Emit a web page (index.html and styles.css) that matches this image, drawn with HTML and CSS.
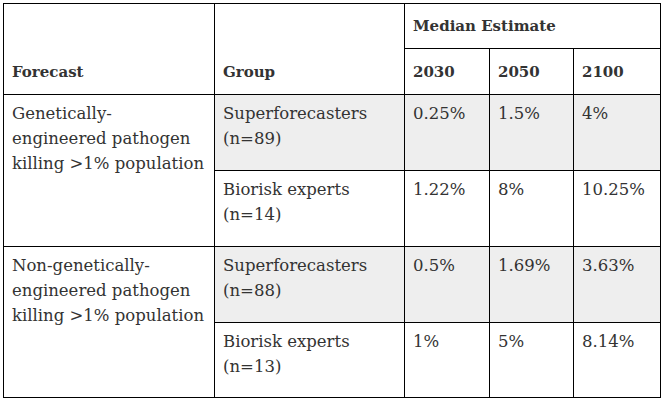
FILE: index.html
```html
<!DOCTYPE html>
<html lang="en">
<head>
<meta charset="utf-8">
<title>Median Estimate</title>
<link rel="stylesheet" href="styles.css">
</head>
<body>
<table class="forecast-table">
  <colgroup>
    <col class="col-forecast">
    <col class="col-group">
    <col class="col-year-a">
    <col class="col-year-b">
    <col class="col-year-c">
  </colgroup>
  <thead>
    <tr class="head-row-1">
      <th class="head-bottom" rowspan="2">Forecast</th>
      <th class="head-bottom" rowspan="2">Group</th>
      <th class="head-span" colspan="3">Median Estimate</th>
    </tr>
    <tr class="head-row-2">
      <th>2030</th>
      <th>2050</th>
      <th>2100</th>
    </tr>
  </thead>
  <tbody>
    <tr class="body-row shaded">
      <td class="forecast-cell" rowspan="2">Genetically-<br>engineered pathogen killing &gt;1% population</td>
      <td>Superforecasters (n=89)</td>
      <td>0.25%</td>
      <td>1.5%</td>
      <td>4%</td>
    </tr>
    <tr class="body-row">
      <td>Biorisk experts (n=14)</td>
      <td>1.22%</td>
      <td>8%</td>
      <td>10.25%</td>
    </tr>
    <tr class="body-row shaded">
      <td class="forecast-cell" rowspan="2">Non-genetically-<br>engineered pathogen killing &gt;1% population</td>
      <td>Superforecasters (n=88)</td>
      <td>0.5%</td>
      <td>1.69%</td>
      <td>3.63%</td>
    </tr>
    <tr class="body-row last">
      <td>Biorisk experts (n=13)</td>
      <td>1%</td>
      <td>5%</td>
      <td>8.14%</td>
    </tr>
  </tbody>
</table>
</body>
</html>
```

FILE: styles.css
```css
html, body {
  margin: 0;
  padding: 0;
  background: #ffffff;
}

body {
  padding: 3px;
  font-family: "DejaVu Serif", "Liberation Serif", serif;
  font-size: 16.5px;
  line-height: 25px;
  color: #333333;
}

.forecast-table {
  border-collapse: collapse;
  table-layout: fixed;
  width: 657px;
}

.col-forecast { width: 211px; }
.col-group { width: 190px; }
.col-year-a { width: 85px; }
.col-year-b { width: 84px; }
.col-year-c { width: 87px; }

.forecast-table th,
.forecast-table td {
  border: 1px solid #000000;
  text-align: left;
  padding: 0 7px 0 8px;
}

.forecast-table th {
  font-size: 15px;
  font-weight: bold;
  vertical-align: bottom;
  padding-bottom: 9px;
}

.head-row-1 { height: 45px; }
.head-row-2 { height: 46px; }

.forecast-table td {
  vertical-align: top;
  padding-top: 6px;
}

.body-row { height: 76px; }
.body-row.last { height: 75px; }

.shaded td {
  background: #eeeeee;
}

.shaded td.forecast-cell {
  background: #ffffff;
}
```
